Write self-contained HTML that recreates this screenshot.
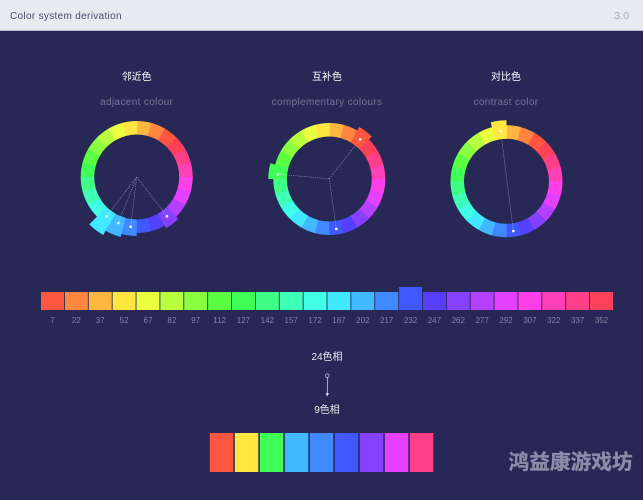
<!DOCTYPE html>
<html><head><meta charset="utf-8"><title>Color system derivation</title>
<style>
html,body{margin:0;padding:0;background:#272855;width:643px;height:500px;overflow:hidden}
svg{display:block;filter:blur(.3px)}
text{font-family:"Liberation Sans","Noto Sans CJK SC",sans-serif}
.t{font-size:10px;fill:#fff;text-anchor:middle}
.s{font-size:10px;fill:#77779a;text-anchor:middle;letter-spacing:.35px}
.n{font-size:8px;fill:#8585a5;text-anchor:middle}
.d{stroke:#fff;stroke-opacity:.55;stroke-width:.6;stroke-dasharray:1.2 1;fill:none}
</style></head><body>
<svg width="643" height="500" viewBox="0 0 643 500" xmlns="http://www.w3.org/2000/svg">
<defs>
<path id="s" d="M0-56A56 56 0 0 1 15.06-53.94L11.43-40.94A42.5 42.5 0 0 0 0-42.5Z"/>
<path id="r59" d="M0-59A59 59 0 0 1 15.27-56.99L11-41.052A42.5 42.5 0 0 0 0-42.5Z"/>
<path id="r60" d="M0-60A60 60 0 0 1 15.53-57.96L11-41.052A42.5 42.5 0 0 0 0-42.5Z"/>
<path id="r61" d="M0-61A61 61 0 0 1 15.79-58.92L11-41.052A42.5 42.5 0 0 0 0-42.5Z"/>
<path id="r62" d="M0-62A62 62 0 0 1 16.05-59.89L11-41.052A42.5 42.5 0 0 0 0-42.5Z"/>
<path id="r67" d="M0-67A67 67 0 0 1 17.34-64.72L11-41.052A42.5 42.5 0 0 0 0-42.5Z"/>
<g id="wheel">
<use href="#s" transform="rotate(0)" fill="#FFB640"/>
<use href="#s" transform="rotate(15)" fill="#FF8640"/>
<use href="#s" transform="rotate(30)" fill="#FF5640"/>
<use href="#s" transform="rotate(45)" fill="#FF4059"/>
<use href="#s" transform="rotate(60)" fill="#FF4089"/>
<use href="#s" transform="rotate(75)" fill="#FF40B9"/>
<use href="#s" transform="rotate(90)" fill="#FF40E9"/>
<use href="#s" transform="rotate(105)" fill="#E640FF"/>
<use href="#s" transform="rotate(120)" fill="#B640FF"/>
<use href="#s" transform="rotate(135)" fill="#8640FF"/>
<use href="#s" transform="rotate(150)" fill="#5640FF"/>
<use href="#s" transform="rotate(165)" fill="#4059FF"/>
<use href="#s" transform="rotate(180)" fill="#4089FF"/>
<use href="#s" transform="rotate(195)" fill="#40B9FF"/>
<use href="#s" transform="rotate(210)" fill="#40E9FF"/>
<use href="#s" transform="rotate(225)" fill="#40FFE6"/>
<use href="#s" transform="rotate(240)" fill="#40FFB6"/>
<use href="#s" transform="rotate(255)" fill="#40FF86"/>
<use href="#s" transform="rotate(270)" fill="#40FF56"/>
<use href="#s" transform="rotate(285)" fill="#59FF40"/>
<use href="#s" transform="rotate(300)" fill="#89FF40"/>
<use href="#s" transform="rotate(315)" fill="#B9FF40"/>
<use href="#s" transform="rotate(330)" fill="#E9FF40"/>
<use href="#s" transform="rotate(345)" fill="#FFE640"/>
</g>
</defs>

<rect width="643" height="500" fill="#272855"/>
<rect width="643" height="30" fill="#E9EAF0"/>
<rect y="30" width="643" height="1" fill="#B9BBD0"/>
<text x="10" y="19" font-size="10" fill="#45476E" letter-spacing=".32">Color system derivation</text>
<text x="629" y="19" font-size="10.500" fill="#A9AABC" text-anchor="end">3.0</text>

<text class="t" x="136.700" y="80">邻近色</text>
<text class="s" x="136.700" y="105">adjacent colour</text>
<text class="t" x="327" y="80">互补色</text>
<text class="s" x="327" y="105">complementary colours</text>
<text class="t" x="506" y="80">对比色</text>
<text class="s" x="506" y="105">contrast color</text>

<g transform="translate(136.700 177)">
<use href="#wheel"/>
<use href="#r59" transform="rotate(135)" fill="#8640FF"/>
<use href="#r59" transform="rotate(180)" fill="#4089FF"/>
<use href="#r62" transform="rotate(195)" fill="#40B9FF"/>
<use href="#r67" transform="rotate(210)" fill="#40E9FF"/>
</g>
<path class="d" d="M136.700 177L106.700 216.300M136.700 177L118.300 223M136.700 177L130.700 226.700M136.700 177L167 216.300"/>
<g fill="#fff"><circle cx="106.700" cy="216.300" r="1.300"/><circle cx="118.300" cy="223" r="1.300"/><circle cx="130.700" cy="226.700" r="1.300"/><circle cx="167" cy="216.300" r="1.300"/></g>

<g transform="translate(329.300 179)">
<use href="#wheel"/>
<use href="#r60" transform="rotate(30)" fill="#FF5640"/>
<use href="#r61" transform="rotate(270)" fill="#40FF56"/>
</g>
<path class="d" d="M329.300 178.700L360.300 139.300M329.300 178.700L278 174.300M329.300 178.700L336.300 229"/>
<g fill="#fff"><circle cx="360.300" cy="139.300" r="1.300"/><circle cx="278" cy="174.300" r="1.300"/><circle cx="336.300" cy="229" r="1.300"/></g>

<g transform="translate(506.500 181.300)">
<use href="#wheel"/>
<use href="#r61" transform="rotate(345)" fill="#FFE640"/>
</g>
<path class="d" d="M500.700 131.300L513.300 231"/>
<g fill="#fff"><circle cx="500.700" cy="131.300" r="1.300"/><circle cx="513.300" cy="231" r="1.300"/></g>

<rect x="41" y="292" width="23" height="18" fill="#FF5640"/>
<rect x="64.870" y="292" width="23" height="18" fill="#FF8640"/>
<rect x="88.740" y="292" width="23" height="18" fill="#FFB640"/>
<rect x="112.610" y="292" width="23" height="18" fill="#FFE640"/>
<rect x="136.480" y="292" width="23" height="18" fill="#E9FF40"/>
<rect x="160.350" y="292" width="23" height="18" fill="#B9FF40"/>
<rect x="184.220" y="292" width="23" height="18" fill="#89FF40"/>
<rect x="208.090" y="292" width="23" height="18" fill="#59FF40"/>
<rect x="231.960" y="292" width="23" height="18" fill="#40FF56"/>
<rect x="255.830" y="292" width="23" height="18" fill="#40FF86"/>
<rect x="279.700" y="292" width="23" height="18" fill="#40FFB6"/>
<rect x="303.570" y="292" width="23" height="18" fill="#40FFE6"/>
<rect x="327.440" y="292" width="23" height="18" fill="#40E9FF"/>
<rect x="351.310" y="292" width="23" height="18" fill="#40B9FF"/>
<rect x="375.180" y="292" width="23" height="18" fill="#4089FF"/>
<rect x="399.050" y="287" width="23" height="23" fill="#4059FF"/>
<rect x="422.920" y="292" width="23" height="18" fill="#5640FF"/>
<rect x="446.790" y="292" width="23" height="18" fill="#8640FF"/>
<rect x="470.660" y="292" width="23" height="18" fill="#B640FF"/>
<rect x="494.530" y="292" width="23" height="18" fill="#E640FF"/>
<rect x="518.400" y="292" width="23" height="18" fill="#FF40E9"/>
<rect x="542.270" y="292" width="23" height="18" fill="#FF40B9"/>
<rect x="566.140" y="292" width="23" height="18" fill="#FF4089"/>
<rect x="590.010" y="292" width="23" height="18" fill="#FF4059"/>

<g class="labels">
<text class="n" x="52.500" y="323">7</text>
<text class="n" x="76.370" y="323">22</text>
<text class="n" x="100.240" y="323">37</text>
<text class="n" x="124.110" y="323">52</text>
<text class="n" x="147.980" y="323">67</text>
<text class="n" x="171.850" y="323">82</text>
<text class="n" x="195.720" y="323">97</text>
<text class="n" x="219.590" y="323">112</text>
<text class="n" x="243.460" y="323">127</text>
<text class="n" x="267.330" y="323">142</text>
<text class="n" x="291.200" y="323">157</text>
<text class="n" x="315.070" y="323">172</text>
<text class="n" x="338.940" y="323">187</text>
<text class="n" x="362.810" y="323">202</text>
<text class="n" x="386.680" y="323">217</text>
<text class="n" x="410.550" y="323">232</text>
<text class="n" x="434.420" y="323">247</text>
<text class="n" x="458.290" y="323">262</text>
<text class="n" x="482.160" y="323">277</text>
<text class="n" x="506.030" y="323">292</text>
<text class="n" x="529.900" y="323">307</text>
<text class="n" x="553.770" y="323">322</text>
<text class="n" x="577.640" y="323">337</text>
<text class="n" x="601.510" y="323">352</text>
</g>

<text class="t" x="327" y="360" fill-opacity=".9">24色相</text>
<circle cx="327.300" cy="375.700" r="1.800" fill="none" stroke="#D5D5E2" stroke-width=".7"/>
<path d="M327.300 377.500V394" stroke="#E5E5EE" stroke-width=".7"/>
<path d="M325.600 393.300H329L327.300 396.300Z" fill="#F0F0F5"/>
<text class="t" x="327" y="413" fill-opacity=".9">9色相</text>

<rect x="209.800" y="433" width="23.500" height="39" fill="#FF5640"/>
<rect x="234.800" y="433" width="23.500" height="39" fill="#FFE640"/>
<rect x="259.800" y="433" width="23.500" height="39" fill="#40FF56"/>
<rect x="284.800" y="433" width="23.500" height="39" fill="#40B9FF"/>
<rect x="309.800" y="433" width="23.500" height="39" fill="#4089FF"/>
<rect x="334.800" y="433" width="23.500" height="39" fill="#4059FF"/>
<rect x="359.800" y="433" width="23.500" height="39" fill="#8640FF"/>
<rect x="384.800" y="433" width="23.500" height="39" fill="#E640FF"/>
<rect x="409.800" y="433" width="23.500" height="39" fill="#FF4089"/>

<text x="508.500" y="469" font-size="20.700" font-weight="700" fill="#8C8CAA" stroke="#8C8CAA" stroke-width=".35">鸿益康游戏坊</text>
</svg>
</body></html>
